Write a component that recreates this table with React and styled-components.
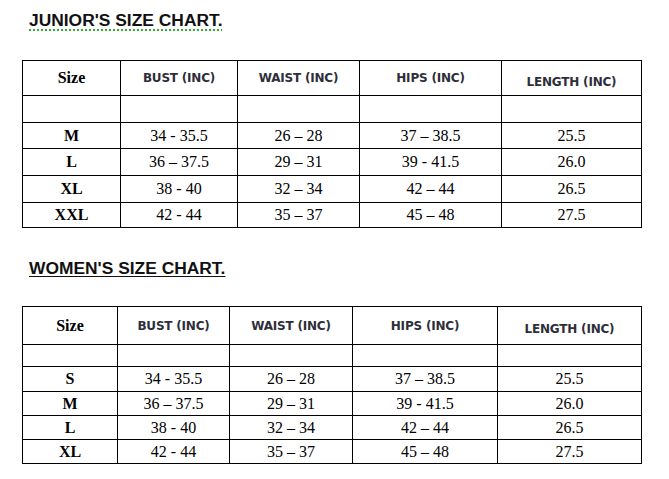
import React from "react";
import styled, { createGlobalStyle } from "styled-components";

const GlobalStyle = createGlobalStyle`
  html, body {
    margin: 0;
    padding: 0;
    background: #ffffff;
  }
`;

const Page = styled.div`
  width: 669px;
  padding: 10px 0 0 22px;
  box-sizing: border-box;
  display: flex;
  flex-direction: column;
  align-items: flex-start;
`;

const Title = styled.h2`
  margin: 0 0 0 7px;
  font-family: "Liberation Sans", Arial, sans-serif;
  font-weight: 700;
  font-size: 17.4px;
  line-height: 20px;
  color: #111;
  text-decoration-line: underline;
  text-decoration-style: ${(p) => (p.$squiggle ? "dotted" : "solid")};
  text-decoration-color: ${(p) => (p.$squiggle ? "#2fae2f" : "#111")};
  text-decoration-thickness: ${(p) => (p.$squiggle ? "2px" : "1px")};
  text-underline-offset: ${(p) => (p.$squiggle ? "3px" : "2px")};
`;

const Chart = styled.table`
  border-collapse: collapse;
  table-layout: fixed;
  width: ${(p) => p.$w}px;
  margin-top: ${(p) => p.$gap}px;
  margin-bottom: ${(p) => p.$after || 0}px;
`;

const Row = styled.tr`
  height: ${(p) => p.$h}px;
`;

const Cell = styled.td`
  border: 1px solid #000;
  padding: 0;
  text-align: center;
  vertical-align: middle;
  font-family: "Liberation Serif", "Times New Roman", serif;
  font-size: 16px;
  font-weight: ${(p) => (p.$bold ? 700 : 400)};
  color: #000;
  line-height: 18px;
`;

const HeadCell = styled.td`
  border: 1px solid #000;
  padding: ${(p) => p.$shift || 0}px 0 0 0;
  text-align: center;
  vertical-align: middle;
  font-family: "DejaVu Sans", Verdana, sans-serif;
  font-size: 12px;
  font-weight: 700;
  letter-spacing: -0.2px;
  color: #2e2e3a;
  line-height: 14px;
`;

const SizeHead = styled(Cell)`
  font-weight: 700;
`;

const SizeChart = ({ widths, heights, rows, gap, after }) => (
  <Chart
    $gap={gap}
    $after={after}
    $w={widths.reduce((a, b) => a + b, 0) + 1}
  >
    <colgroup>
      {widths.map((w, i) => (
        <col key={i} style={{ width: w }} />
      ))}
    </colgroup>
    <tbody>
      <Row $h={heights[0]}>
        <SizeHead>Size</SizeHead>
        <HeadCell>BUST (INC)</HeadCell>
        <HeadCell>WAIST (INC)</HeadCell>
        <HeadCell>HIPS (INC)</HeadCell>
        <HeadCell $shift={7}>LENGTH (INC)</HeadCell>
      </Row>
      <Row $h={heights[1]}>
        <Cell />
        <Cell />
        <Cell />
        <Cell />
        <Cell />
      </Row>
      {rows.map((r, i) => (
        <Row key={r[0]} $h={heights[i + 2]}>
          <Cell $bold>{r[0]}</Cell>
          <Cell>{r[1]}</Cell>
          <Cell>{r[2]}</Cell>
          <Cell>{r[3]}</Cell>
          <Cell>{r[4]}</Cell>
        </Row>
      ))}
    </tbody>
  </Chart>
);

const junior = [
  ["M", "34 - 35.5", "26 – 28", "37 – 38.5", "25.5"],
  ["L", "36 – 37.5", "29 – 31", "39 - 41.5", "26.0"],
  ["XL", "38 - 40", "32 – 34", "42 – 44", "26.5"],
  ["XXL", "42 - 44", "35 – 37", "45 – 48", "27.5"],
];

const women = [
  ["S", "34 - 35.5", "26 – 28", "37 – 38.5", "25.5"],
  ["M", "36 – 37.5", "29 – 31", "39 - 41.5", "26.0"],
  ["L", "38 - 40", "32 – 34", "42 – 44", "26.5"],
  ["XL", "42 - 44", "35 – 37", "45 – 48", "27.5"],
];

export default function App() {
  return (
    <>
      <GlobalStyle />
      <Page>
        <Title $squiggle>JUNIOR'S SIZE CHART.</Title>
        <SizeChart
          gap={30}
          after={30}
          widths={[98, 117, 122, 142, 140]}
          heights={[35, 27, 26, 27, 27, 25]}
          rows={junior}
        />
        <Title>WOMEN'S SIZE CHART.</Title>
        <SizeChart
          gap={28}
          widths={[95, 112, 123, 145, 144]}
          heights={[38, 22, 25, 24, 24, 24]}
          rows={women}
        />
      </Page>
    </>
  );
}
